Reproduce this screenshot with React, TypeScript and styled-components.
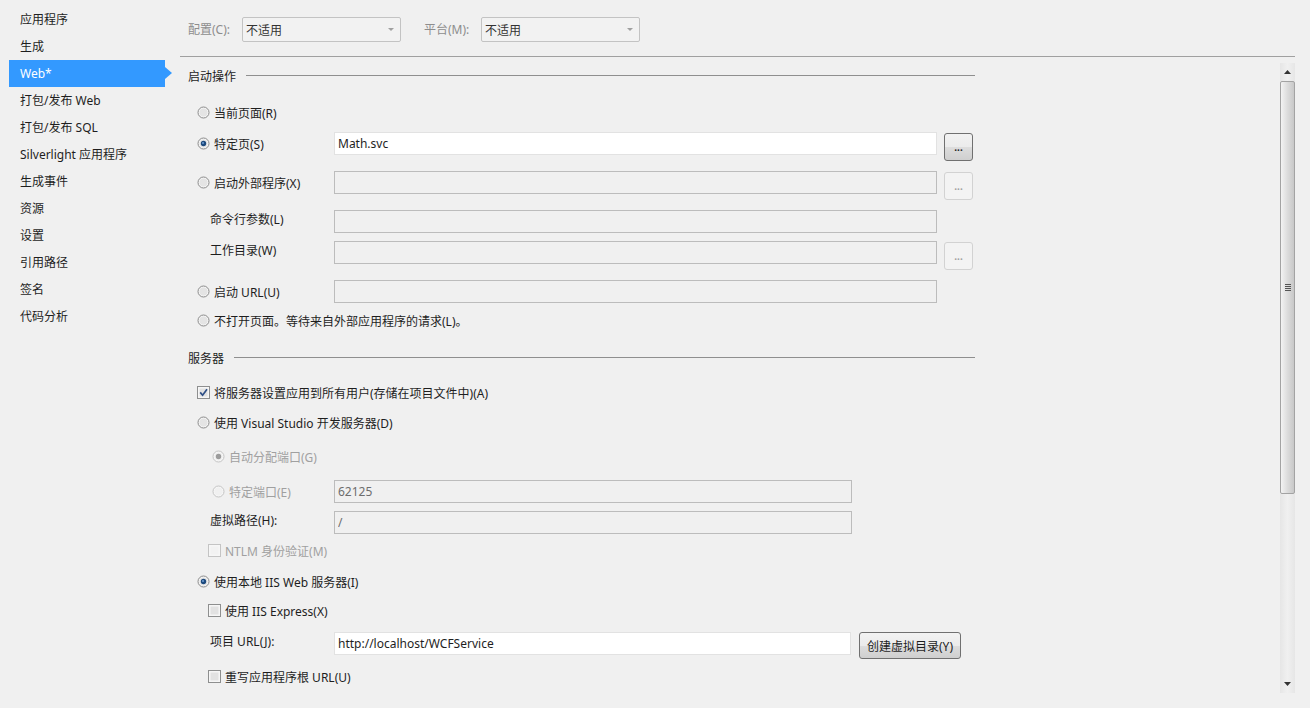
import styled, { createGlobalStyle } from "styled-components";

const GlobalStyle = createGlobalStyle`
  html, body {
    margin: 0;
    padding: 0;
    background: #f0f0f0;
  }
  body {
    font-family: "Noto Sans", "Noto Sans CJK SC", sans-serif;
    font-size: 12px;
    color: #1e1e1e;
  }
`;

const navItems = [
  "应用程序",
  "生成",
  "Web*",
  "打包/发布 Web",
  "打包/发布 SQL",
  "Silverlight 应用程序",
  "生成事件",
  "资源",
  "设置",
  "引用路径",
  "签名",
  "代码分析",
];

function Radio({ checked, disabled }: { checked?: boolean; disabled?: boolean }) {
  const ring = disabled ? "#c4c4c4" : "#8a8a8a";
  const dot = disabled ? "#9c9c9c" : "#1d4a7e";
  return (
    <svg width="13" height="13" viewBox="0 0 13 13">
      <circle cx="6.5" cy="6.5" r="5.5" fill="#f6f6f6" stroke={ring} />
      <circle cx="6.5" cy="6.5" r="4" fill={disabled ? "#f0f0f0" : "#e4e4e4"} />
      {checked && <circle cx="6.5" cy="6.5" r="2.7" fill={dot} />}
      {checked && !disabled && <circle cx="6" cy="6" r="1" fill="#6f9fd6" />}
    </svg>
  );
}

function Check({ checked, disabled }: { checked?: boolean; disabled?: boolean }) {
  return (
    <svg width="13" height="13" viewBox="0 0 13 13">
      <rect x="0.5" y="0.5" width="12" height="12" fill="#f6f6f6" stroke={disabled ? "#c4c4c4" : "#8e8f8f"} />
      <rect x="2.5" y="2.5" width="8" height="8" fill={disabled ? "#f2f2f2" : "#e2e2e2"} />
      {checked && (
        <path d="M3.2 6.4 L5.6 9.2 L10 3.2" fill="none" stroke="#2e4f86" strokeWidth="1.7" />
      )}
    </svg>
  );
}

export default function App() {
  return (
    <>
      <GlobalStyle />
      <Page>
        <Nav>
          {navItems.map((n) => (
            <NavItem key={n} $active={n === "Web*"}>
              {n}
            </NavItem>
          ))}
        </Nav>
        <Main>
          <TopBar>
            <TopLabel>配置(C):</TopLabel>
            <Select>
              <span>不适用</span>
              <Caret />
            </Select>
            <TopLabel $gap>平台(M):</TopLabel>
            <Select>
              <span>不适用</span>
              <Caret />
            </Select>
          </TopBar>
          <Body>
            <Content>
              <SectionHead $mt={0}>
                <span>启动操作</span>
                <Rule />
              </SectionHead>

              <Row $mt={14}>
                <LabelCell $indent={9}>
                  <Radio />
                  <span>当前页面(R)</span>
                </LabelCell>
              </Row>
              <Row $mt={8}>
                <LabelCell $indent={9}>
                  <Radio checked />
                  <span>特定页(S)</span>
                </LabelCell>
                <Field $w={603} readOnly value="Math.svc" />
                <DotsButton>...</DotsButton>
              </Row>
              <Row $mt={16}>
                <LabelCell $indent={9}>
                  <Radio />
                  <span>启动外部程序(X)</span>
                </LabelCell>
                <Field $w={603} $off readOnly value="" />
                <DotsButton $off>...</DotsButton>
              </Row>
              <Row $mt={16}>
                <LabelCell $indent={22}>
                  <PlainLabel>命令行参数(L)</PlainLabel>
                </LabelCell>
                <Field $w={603} $off readOnly value="" />
              </Row>
              <Row $mt={8}>
                <LabelCell $indent={22}>
                  <PlainLabel>工作目录(W)</PlainLabel>
                </LabelCell>
                <Field $w={603} $off readOnly value="" />
                <DotsButton $off>...</DotsButton>
              </Row>
              <Row $mt={16}>
                <LabelCell $indent={9}>
                  <Radio />
                  <span>启动 URL(U)</span>
                </LabelCell>
                <Field $w={603} $off readOnly value="" />
              </Row>
              <Row $mt={6}>
                <LabelCell $indent={9}>
                  <Radio />
                  <span>不打开页面。等待来自外部应用程序的请求(L)。</span>
                </LabelCell>
              </Row>

              <SectionHead $mt={14}>
                <span>服务器</span>
                <Rule />
              </SectionHead>

              <Row $mt={12}>
                <LabelCell $indent={9}>
                  <Check checked />
                  <span>将服务器设置应用到所有用户(存储在项目文件中)(A)</span>
                </LabelCell>
              </Row>
              <Row $mt={7}>
                <LabelCell $indent={9}>
                  <Radio />
                  <span>使用 Visual Studio 开发服务器(D)</span>
                </LabelCell>
              </Row>
              <Row $mt={11}>
                <LabelCell $indent={24} $off>
                  <Radio checked disabled />
                  <span>自动分配端口(G)</span>
                </LabelCell>
              </Row>
              <Row $mt={12}>
                <LabelCell $indent={24} $off>
                  <Radio disabled />
                  <span>特定端口(E)</span>
                </LabelCell>
                <Field $w={518} $off $dim readOnly value="62125" />
              </Row>
              <Row $mt={8}>
                <LabelCell $indent={22}>
                  <PlainLabel>虚拟路径(H):</PlainLabel>
                </LabelCell>
                <Field $w={518} $off $dim readOnly value="/" />
              </Row>
              <Row $mt={5}>
                <LabelCell $indent={20} $off>
                  <Check disabled />
                  <span>NTLM 身份验证(M)</span>
                </LabelCell>
              </Row>
              <Row $mt={8}>
                <LabelCell $indent={9}>
                  <Radio checked />
                  <span>使用本地 IIS Web 服务器(I)</span>
                </LabelCell>
              </Row>
              <Row $mt={6}>
                <LabelCell $indent={20}>
                  <Check />
                  <span>使用 IIS Express(X)</span>
                </LabelCell>
              </Row>
              <Row $mt={10}>
                <LabelCell $indent={22}>
                  <PlainLabel $lift={5}>项目 URL(J):</PlainLabel>
                </LabelCell>
                <Field $w={517} readOnly value="http://localhost/WCFService" />
                <CreateButton>创建虚拟目录(Y)</CreateButton>
              </Row>
              <Row $mt={10}>
                <LabelCell $indent={20}>
                  <Check />
                  <span>重写应用程序根 URL(U)</span>
                </LabelCell>
              </Row>
            </Content>
            <ScrollBar>
              <ScrollArrow>
                <svg width="7" height="4" viewBox="0 0 7 4">
                  <path d="M0 4 L3.5 0 L7 4 Z" fill="#333" />
                </svg>
              </ScrollArrow>
              <Thumb>
                <Grip />
                <Grip />
                <Grip />
                <Grip />
              </Thumb>
              <Track />
              <ScrollArrow>
                <svg width="7" height="4" viewBox="0 0 7 4">
                  <path d="M0 0 L7 0 L3.5 4 Z" fill="#333" />
                </svg>
              </ScrollArrow>
            </ScrollBar>
          </Body>
        </Main>
      </Page>
    </>
  );
}

const Page = styled.div`
  display: flex;
  width: 1310px;
  height: 708px;
  overflow: hidden;
`;

const Nav = styled.div`
  width: 180px;
  flex-shrink: 0;
  padding-top: 6px;
  box-sizing: border-box;
`;

const NavItem = styled.div<{ $active?: boolean }>`
  position: relative;
  height: 27px;
  line-height: 27px;
  width: 156px;
  margin-left: 9px;
  padding-left: 11px;
  box-sizing: border-box;
  white-space: nowrap;
  background: ${(p) => (p.$active ? "#3399ff" : "transparent")};
  color: ${(p) => (p.$active ? "#ffffff" : "#1e1e1e")};

  &::after {
    content: "";
    display: ${(p) => (p.$active ? "block" : "none")};
    position: absolute;
    right: -7px;
    top: 7px;
    border-left: 7px solid #3399ff;
    border-top: 6px solid transparent;
    border-bottom: 6px solid transparent;
  }
`;

const Main = styled.div`
  flex: 1;
  display: flex;
  flex-direction: column;
  margin-right: 15px;
  min-width: 0;
`;

const TopBar = styled.div`
  height: 57px;
  box-sizing: border-box;
  padding: 17px 0 0 8px;
  display: flex;
  align-items: flex-start;
  border-bottom: 1px solid #a0a0a0;
  flex-shrink: 0;
`;

const TopLabel = styled.span<{ $gap?: boolean }>`
  color: #8d8d8d;
  line-height: 25px;
  margin-left: ${(p) => (p.$gap ? "23px" : "0")};
  width: ${(p) => (p.$gap ? "57px" : "54px")};
`;

const Select = styled.div`
  width: 159px;
  height: 25px;
  box-sizing: border-box;
  border: 1px solid #c3c3c3;
  border-radius: 2px;
  background: #f2f2f2;
  display: flex;
  align-items: center;
  justify-content: space-between;
  padding: 0 6px 0 3px;
  color: #333;
`;

const Caret = styled.span`
  width: 0;
  height: 0;
  border-left: 3px solid transparent;
  border-right: 3px solid transparent;
  border-top: 3px solid #a0a0a0;
`;

const Body = styled.div`
  flex: 1;
  display: flex;
  padding-top: 7px;
  min-height: 0;
`;

const Content = styled.div`
  flex: 1;
  padding-left: 8px;
  overflow: hidden;
`;

const SectionHead = styled.div<{ $mt: number }>`
  width: 787px;
  height: 23px;
  margin-top: ${(p) => p.$mt}px;
  display: flex;
  align-items: center;
  gap: 10px;
  white-space: nowrap;
`;

const Rule = styled.div`
  flex: 1;
  height: 1px;
  background: #8f8f8f;
`;

const Row = styled.div<{ $mt: number }>`
  height: 23px;
  margin-top: ${(p) => p.$mt}px;
  display: flex;
  align-items: center;
`;

const LabelCell = styled.div<{ $indent: number; $off?: boolean }>`
  min-width: 146px;
  box-sizing: border-box;
  padding-left: ${(p) => p.$indent}px;
  display: flex;
  align-items: center;
  gap: 4px;
  white-space: nowrap;
  color: ${(p) => (p.$off ? "#a0a0a0" : "#1e1e1e")};

  svg {
    flex-shrink: 0;
  }
`;

const PlainLabel = styled.span<{ $lift?: number }>`
  margin-bottom: ${(p) => p.$lift ?? 6}px;
`;

const Field = styled.input<{ $w: number; $off?: boolean; $dim?: boolean }>`
  width: ${(p) => p.$w}px;
  height: 23px;
  box-sizing: border-box;
  margin: 0;
  padding: 0 3px;
  font: inherit;
  color: ${(p) => (p.$dim ? "#6d6d6d" : "#1e1e1e")};
  background: ${(p) => (p.$off ? "#f0f0f0" : "#ffffff")};
  border: 1px solid ${(p) => (p.$off ? "#bcbcbc" : "#e2e2e2")};
  outline: none;
  flex-shrink: 0;
`;

const DotsButton = styled.div<{ $off?: boolean }>`
  align-self: flex-start;
  margin: 1px 0 0 7px;
  width: 29px;
  height: 28px;
  box-sizing: border-box;
  border-radius: 3px;
  border: 1px solid ${(p) => (p.$off ? "#d2d2d2" : "#707070")};
  background: ${(p) =>
    p.$off
      ? "#f3f3f3"
      : "linear-gradient(#f2f2f2 0%, #ebebeb 50%, #dddddd 51%, #cfcfcf 100%)"};
  color: ${(p) => (p.$off ? "#a0a0a0" : "#1e1e1e")};
  display: flex;
  align-items: center;
  justify-content: center;
  font-size: 10px;
  font-weight: bold;
  line-height: 1;
`;

const CreateButton = styled.div`
  align-self: flex-start;
  margin-left: 8px;
  width: 102px;
  height: 27px;
  box-sizing: border-box;
  border-radius: 3px;
  border: 1px solid #707070;
  background: linear-gradient(#f2f2f2 0%, #ebebeb 50%, #dddddd 51%, #cfcfcf 100%);
  display: flex;
  align-items: center;
  justify-content: center;
  white-space: nowrap;
  font-size: 12px;
`;

const ScrollBar = styled.div`
  width: 15px;
  height: 630px;
  margin-top: -1px;
  display: flex;
  flex-direction: column;
  background: linear-gradient(to right, #e6e6e6, #f0f0f0 50%, #e6e6e6);
  flex-shrink: 0;
`;

const ScrollArrow = styled.div`
  height: 18px;
  display: flex;
  align-items: center;
  justify-content: center;
  flex-shrink: 0;
`;

const Thumb = styled.div`
  height: 413px;
  box-sizing: border-box;
  border: 1px solid #a3a3a3;
  border-radius: 2px;
  background: linear-gradient(to right, #f3f3f3, #dcdcdc 50%, #c8c8c8);
  display: flex;
  flex-direction: column;
  align-items: center;
  justify-content: center;
  gap: 1px;
  flex-shrink: 0;
`;

const Grip = styled.div`
  width: 6px;
  height: 1px;
  background: #555;
`;

const Track = styled.div`
  flex: 1;
`;
